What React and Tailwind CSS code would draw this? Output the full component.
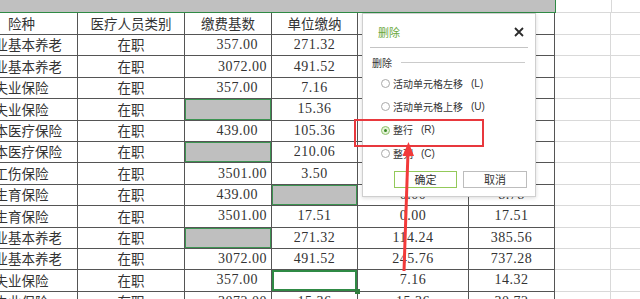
import React from 'react'

const rows = [
  ['企业基本养老', '在职', '357.00', '271.32', '', ''],
  ['企业基本养老', '在职', '3072.00', '491.52', '', ''],
  ['失业保险', '在职', '357.00', '7.16', '', ''],
  ['失业保险', '在职', null, '15.36', '', ''],
  ['基本医疗保险', '在职', '439.00', '105.36', '', ''],
  ['基本医疗保险', '在职', null, '210.06', '', ''],
  ['工伤保险', '在职', '3501.00', '3.50', '', ''],
  ['生育保险', '在职', '439.00', null, '0.00', '8.78'],
  ['生育保险', '在职', '3501.00', '17.51', '0.00', '17.51'],
  ['企业基本养老', '在职', null, '271.32', '114.24', '385.56'],
  ['企业基本养老', '在职', '3072.00', '491.52', '245.76', '737.28'],
  ['失业保险', '在职', '357.00', 'sel', '7.16', '14.32'],
  ['失业保险', '在职', '3072.00', '15.36', '15.36', '30.72'],
]

const colCls = [
  'w-[112px] -ml-[34px] justify-center',
  'w-[107px] justify-center',
  'w-[87px] justify-end',
  'w-[86px] justify-center',
  'w-[111px] justify-center',
  'w-[86px] justify-center',
]

const cjk = "font-['Noto_Sans_CJK_SC',sans-serif]"
const num = "font-[family-name:'Liberation_Serif',serif] text-[14px] tracking-[0.5px]"

function Extras({ h }) {
  return (
    <>
      <div className={`shrink-0 w-[56px] border-r border-b border-[#d9d9d9] ${h}`} />
      <div className={`flex-1 border-b border-[#d9d9d9] ${h}`} />
    </>
  )
}

function Row({ r }) {
  return (
    <div className="flex h-[21.4px]">
      {r.map((v, i) => {
        if (v === null) {
          return (
            <div key={i} className={`shrink-0 flex border-r border-b border-[#555] bg-[#bfbfbf] shadow-[inset_0_0_0_1px_#3d9452] ${colCls[i]}`} />
          )
        }
        if (v === 'sel') {
          return (
            <div key={i} className={`relative shrink-0 flex border-r border-b border-[#555] shadow-[inset_0_0_0_2px_#2f8a45] ${colCls[i]}`}>
              <div className="absolute -right-[3px] -bottom-[3px] w-[5px] h-[5px] bg-[#2f7d3e] z-10" />
            </div>
          )
        }
        const isNum = i >= 2
        const pad = i === 2 ? (v.length === 7 ? 'pr-[4px]' : 'pr-[13px]') : ''
        return (
          <div key={i} className={`shrink-0 flex items-center border-r border-b border-[#555] text-[#333] leading-none ${colCls[i]} ${pad} ${isNum ? num : cjk + ' text-[13.5px]'}`}>
            {v}
          </div>
        )
      })}
      <Extras h="h-[21.4px]" />
    </div>
  )
}

function Radio({ label, hot, on }) {
  return (
    <div className="h-[23.3px] flex items-center pl-[18px]">
      {on ? (
        <span className="shrink-0 w-[9px] h-[9px] rounded-full border border-[#8fc16d] bg-[#e4f2d8] flex items-center justify-center">
          <span className="w-[3px] h-[3px] rounded-full bg-[#3b8a26]" />
        </span>
      ) : (
        <span className="shrink-0 w-[9px] h-[9px] rounded-full border border-[#a9a9a9] bg-white" />
      )}
      <span className="ml-[3px] text-[10px] text-[#333] leading-none">{label}</span>
      <span className="ml-[8px] text-[10px] text-[#333] leading-none font-['Liberation_Sans',sans-serif]">({hot})</span>
    </div>
  )
}

function Dialog() {
  return (
    <div className={`absolute left-[362px] top-[13px] w-[174px] h-[184px] bg-white border border-[#cfcfcf] shadow-[0_1px_4px_rgba(0,0,0,0.15)] flex flex-col ${cjk}`}>
      <div className="h-[33px] pt-[3px] flex items-center justify-between pl-[15px] pr-[11px]">
        <span className="text-[11px] text-[#6aa83a] leading-none">删除</span>
        <svg width="10" height="10" viewBox="0 0 10 10">
          <path d="M1 1L9 9M9 1L1 9" stroke="#2b2b2b" strokeWidth="1.8" />
        </svg>
      </div>
      <div className="mx-[7px] h-px bg-[#c4c4c4]" />
      <div className="mt-[8px] h-[13px] flex items-center pl-[9px] pr-[10px]">
        <span className="text-[10px] text-[#333] leading-none">删除</span>
        <div className="flex-1 ml-[9px] h-px bg-[#cbcbcb]" />
      </div>
      <div className="mt-[3px] flex flex-col">
        <Radio label="活动单元格左移" hot="L" />
        <Radio label="活动单元格上移" hot="U" />
        <Radio label="整行" hot="R" on />
        <Radio label="整列" hot="C" />
      </div>
      <div className="mt-[6px] flex pl-[31px] gap-[6px]">
        <div className="w-[63px] h-[17px] border-[1.5px] border-[#93c95a] flex items-center justify-center text-[11px] text-[#333] leading-none">确定</div>
        <div className="w-[64px] h-[17px] border border-[#bdbdbd] flex items-center justify-center text-[11px] text-[#333] leading-none">取消</div>
      </div>
    </div>
  )
}

export default function App() {
  return (
    <div className="relative w-[640px] h-[299px] overflow-hidden bg-white">
      <div className="flex h-[13px]">
        <div className="shrink-0 w-[556px] h-[13px] bg-[#c0c0c0] border-b border-r border-[#2f8a45]" />
        <Extras h="h-[13px]" />
      </div>
      <div className="flex h-[22px]">
        {['险种', '医疗人员类别', '缴费基数', '单位缴纳', '', ''].map((v, i) => (
          <div key={i} className={`shrink-0 flex items-center border-r border-b border-[#555] text-[#333] text-[13.5px] leading-none ${cjk} ${colCls[i].replace('justify-end', 'justify-center')}`}>
            {v}
          </div>
        ))}
        <Extras h="h-[22px]" />
      </div>
      {rows.map((r, i) => (
        <Row key={i} r={r} />
      ))}

      <Dialog />

      <div className="absolute left-[354px] top-[119px] w-[130px] h-[28px] border-2 border-[#e8383d]" />
      <svg className="absolute left-0 top-0 pointer-events-none" width="640" height="299">
        <line x1="408" y1="152" x2="404" y2="271" stroke="#f23a3a" strokeWidth="3" />
        <polygon points="408.5,142 402.5,156 414,156" fill="#f23a3a" />
      </svg>
    </div>
  )
}
